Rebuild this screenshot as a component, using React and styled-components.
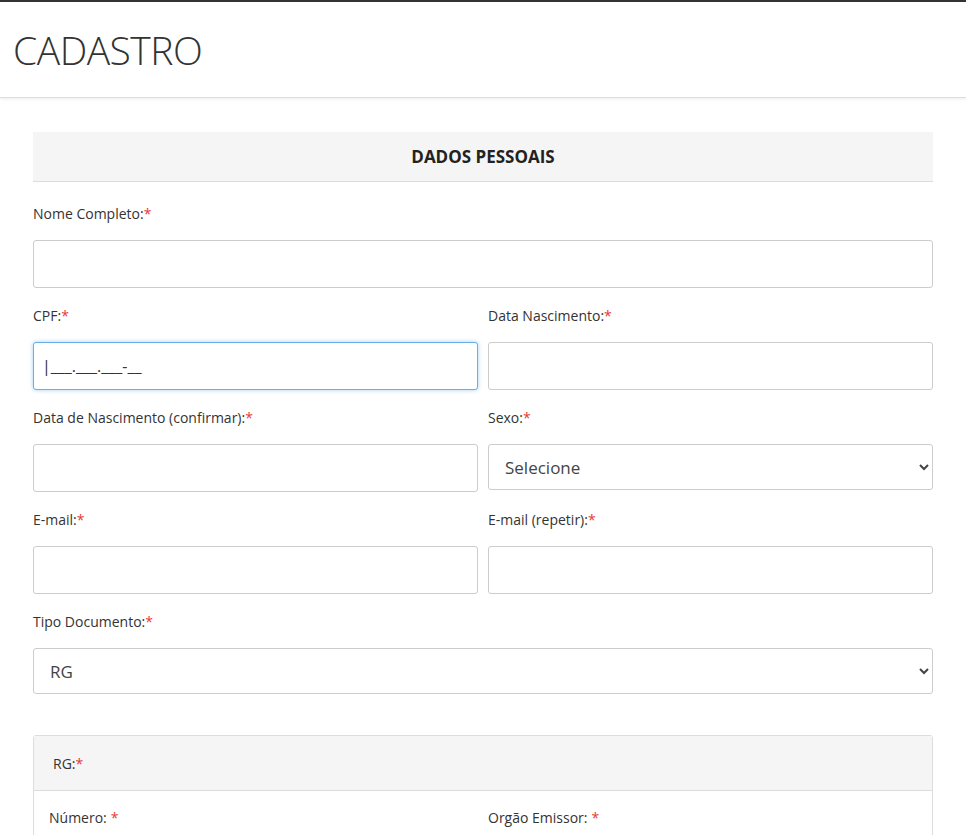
import React from "react";
import styled, { createGlobalStyle } from "styled-components";

const Global = createGlobalStyle`
  body {
    margin: 0;
    background: #fff;
    font-family: "Open Sans", "Noto Sans", sans-serif;
    color: #333;
  }
  * { box-sizing: border-box; }
`;

const Header = styled.header`
  border-top: 2px solid #333;
  height: 98px;
  border-bottom: 1px solid #ddd;
  box-shadow: 0 1px 3px rgba(0, 0, 0, 0.08);
  display: flex;
  align-items: center;
  padding-left: 13px;
`;

const Title = styled.h1`
  margin: 0;
  font-size: 39px;
  font-weight: 300;
  color: #333;
  letter-spacing: -0.5px;
`;

const Container = styled.main`
  width: 900px;
  margin: 34px 0 0 33px;
`;

const SectionHeader = styled.div`
  height: 50px;
  background: #f5f5f5;
  border-bottom: 1px solid #ddd;
  display: flex;
  align-items: center;
  justify-content: center;
  font-weight: 700;
  font-size: 17px;
  color: #222;
`;

const Form = styled.div`
  padding-top: 22px;
`;

const Row = styled.div`
  display: grid;
  grid-template-columns: ${(p) => (p.$cols === 2 ? "1fr 1fr" : "1fr")};
  column-gap: 10px;
  margin-bottom: 18px;
`;

const Field = styled.div`
  display: flex;
  flex-direction: column;
`;

const Label = styled.label`
  font-size: 14px;
  line-height: 20px;
  height: 20px;
  margin-bottom: 16px;
  color: #333;
`;

const Req = styled.span`
  color: #e53935;
  margin-left: ${(p) => (p.$space ? "4px" : "0")};
`;

const Input = styled.input`
  height: 48px;
  border: 1px solid #ccc;
  border-radius: 3px;
  padding: 0 8px;
  font-size: 16px;
  font-family: inherit;
  color: #333;
  outline: none;
  ${(p) =>
    p.$focused &&
    `border-color: #66afe9; box-shadow: 0 0 4px rgba(102,175,233,0.6);`}
`;

const Select = styled.select`
  height: 46px;
  border: 1px solid #ccc;
  border-radius: 3px;
  padding: 0 12px;
  font-size: 17px;
  font-family: inherit;
  color: #444;
  background: #fff;
  outline: none;
`;

const Panel = styled.div`
  margin-top: 41px;
  border: 1px solid #ddd;
  border-radius: 3px;
`;

const PanelHeader = styled.div`
  height: 55px;
  background: #f5f5f5;
  border-bottom: 1px solid #ddd;
  display: flex;
  align-items: center;
  padding-left: 19px;
  font-size: 14px;
`;

const PanelBody = styled.div`
  display: grid;
  grid-template-columns: 1fr 1fr;
  column-gap: 10px;
  padding: 17px 15px;
  font-size: 14px;
`;

const Text = ({ children, space }) => (
  <Label>
    {children}
    <Req $space={space}>*</Req>
  </Label>
);

export default function App() {
  return (
    <>
      <Global />
      <Header>
        <Title>CADASTRO</Title>
      </Header>
      <Container>
        <SectionHeader>DADOS PESSOAIS</SectionHeader>
        <Form>
          <Row>
            <Field>
              <Text>Nome Completo:</Text>
              <Input />
            </Field>
          </Row>
          <Row $cols={2}>
            <Field>
              <Text>CPF:</Text>
              <Input $focused defaultValue="|___.___.___-__" />
            </Field>
            <Field>
              <Text>Data Nascimento:</Text>
              <Input />
            </Field>
          </Row>
          <Row $cols={2}>
            <Field>
              <Text>Data de Nascimento (confirmar):</Text>
              <Input />
            </Field>
            <Field>
              <Text>Sexo:</Text>
              <Select defaultValue="">
                <option value="">Selecione</option>
              </Select>
            </Field>
          </Row>
          <Row $cols={2}>
            <Field>
              <Text>E-mail:</Text>
              <Input />
            </Field>
            <Field>
              <Text>E-mail (repetir):</Text>
              <Input />
            </Field>
          </Row>
          <Row>
            <Field>
              <Text>Tipo Documento:</Text>
              <Select defaultValue="RG">
                <option value="RG">RG</option>
              </Select>
            </Field>
          </Row>
          <Panel>
            <PanelHeader>
              RG:<Req>*</Req>
            </PanelHeader>
            <PanelBody>
              <Text space>Número:</Text>
              <Text space>Orgão Emissor:</Text>
            </PanelBody>
          </Panel>
        </Form>
      </Container>
    </>
  );
}
